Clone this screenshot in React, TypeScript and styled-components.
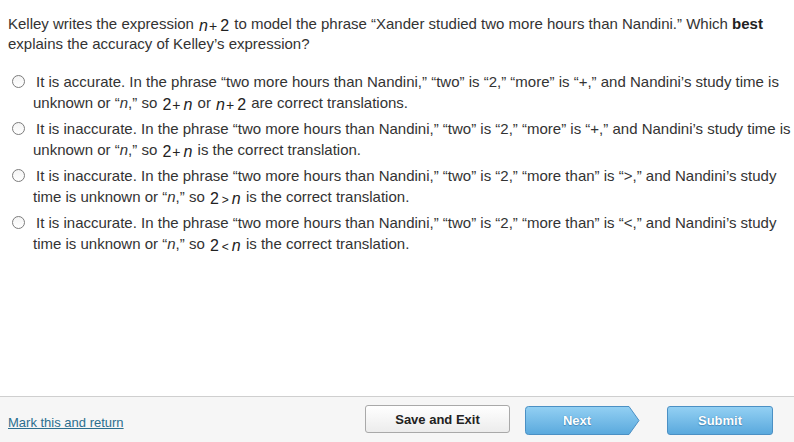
import React from 'react';
import styled, { createGlobalStyle } from 'styled-components';

const GlobalStyle = createGlobalStyle`
  html, body {
    margin: 0;
    padding: 0;
    background: #ffffff;
  }
  body {
    font-family: "Liberation Sans", Arial, sans-serif;
  }
`;

const Page = styled.div`
  width: 794px;
  height: 442px;
  display: flex;
  flex-direction: column;
  overflow: hidden;
`;

const Content = styled.div`
  flex: 1;
  padding: 14px 0 0 8px;
  color: #333333;
  font-size: 15px;
`;

const Question = styled.div`
  line-height: 20px;
  white-space: nowrap;

  b {
    color: #222;
  }
`;

const Options = styled.div`
  margin-top: 17px;
  display: flex;
  flex-direction: column;
  gap: 5px;
`;

const Option = styled.label`
  display: block;
  padding-left: 25px;
  line-height: 21px;
  white-space: nowrap;
  cursor: pointer;
`;

const Radio = styled.span`
  display: inline-block;
  box-sizing: border-box;
  width: 13px;
  height: 13px;
  margin-left: -21px;
  margin-right: 11px;
  border: 1px solid #7c7c7c;
  border-radius: 50%;
  background: linear-gradient(#f4f4f4, #ffffff);
  vertical-align: -1px;
`;

const Math = styled.span`
  font-family: "Liberation Sans", Arial, sans-serif;
  font-size: 16px;
  line-height: 0;
  position: relative;
  top: 2px;
  margin: 0 1px;
  color: #222;

  i {
    font-style: italic;
  }
`;

const Op = styled.span<{ $small?: boolean }>`
  margin: ${(p) => (p.$small ? '0 3px 0 3px' : '0 3px 0 1px')};
  font-size: ${(p) => (p.$small ? '12px' : '14px')};
`;

const Footer = styled.div`
  height: 45px;
  border-top: 1px solid #cfcfcf;
  background: #f6f6f6;
  display: flex;
  align-items: center;
  padding: 0 21px 0 8px;
`;

const MarkLink = styled.a`
  font-size: 13px;
  color: #2c6f8f;
  text-decoration: underline;
  margin-top: 6px;
  cursor: pointer;
`;

const Buttons = styled.div`
  margin-left: auto;
  display: flex;
  align-items: center;
  margin-top: 1px;
`;

const GreyButton = styled.button`
  width: 145px;
  height: 28px;
  box-sizing: border-box;
  border: 1px solid #a9a9a9;
  border-radius: 3px;
  background: linear-gradient(#ffffff, #ececec);
  color: #222;
  font-family: "Liberation Sans", Arial, sans-serif;
  font-weight: bold;
  font-size: 13px;
  padding: 0;
  margin-top: -2px;
`;

const NextWrap = styled.button`
  position: relative;
  width: 115px;
  height: 29px;
  margin-left: 15px;
  border: none;
  background: none;
  padding: 0;
  font-family: "Liberation Sans", Arial, sans-serif;
`;

const NextShape = styled.svg`
  position: absolute;
  left: 0;
  top: 0;
`;

const BlueLabel = styled.span<{ $offset?: number }>`
  position: relative;
  display: block;
  width: ${(p) => (p.$offset ? `${p.$offset}px` : '100%')};
  color: #ffffff;
  font-weight: bold;
  font-size: 13px;
  text-shadow: 0 0 1px #3a7fb0, 0 1px 1px #4b8fc0;
  text-align: center;
`;

const BlueButton = styled.button`
  width: 106px;
  height: 29px;
  margin-left: 27px;
  box-sizing: border-box;
  border: 1px solid #4b90c4;
  border-radius: 3px;
  background: linear-gradient(#93d0f3, #5aa9dd);
  padding: 0;
  font-family: "Liberation Sans", Arial, sans-serif;
`;

const options = [
  [
    <>It is accurate. In the phrase “two more hours than Nandini,” “two” is “2,” “more” is “+,” and Nandini’s study time is</>,
    <>unknown or “<i>n</i>,” so <Math>2<Op>+</Op><i>n</i></Math> or <Math><i>n</i><Op>+</Op>2</Math> are correct translations.</>,
  ],
  [
    <>It is inaccurate. In the phrase “two more hours than Nandini,” “two” is “2,” “more” is “+,” and Nandini’s study time is</>,
    <>unknown or “<i>n</i>,” so <Math>2<Op>+</Op><i>n</i></Math> is the correct translation.</>,
  ],
  [
    <>It is inaccurate. In the phrase “two more hours than Nandini,” “two” is “2,” “more than” is “&gt;,” and Nandini’s study</>,
    <>time is unknown or “<i>n</i>,” so <Math>2<Op $small>&gt;</Op><i>n</i></Math> is the correct translation.</>,
  ],
  [
    <>It is inaccurate. In the phrase “two more hours than Nandini,” “two” is “2,” “more than” is “&lt;,” and Nandini’s study</>,
    <>time is unknown or “<i>n</i>,” so <Math>2<Op $small>&lt;</Op><i>n</i></Math> is the correct translation.</>,
  ],
];

export default function App() {
  return (
    <>
      <GlobalStyle />
      <Page>
        <Content>
          <Question>
            Kelley writes the expression <Math><i>n</i><Op>+</Op>2</Math> to model the phrase “Xander studied two more hours than Nandini.” Which <b>best</b>
            <br />
            explains the accuracy of Kelley’s expression?
          </Question>
          <Options>
            {options.map((lines, i) => (
              <Option key={i}>
                <Radio />
                {lines[0]}
                <br />
                {lines[1]}
              </Option>
            ))}
          </Options>
        </Content>
        <Footer>
          <MarkLink>Mark this and return</MarkLink>
          <Buttons>
            <GreyButton>Save and Exit</GreyButton>
            <NextWrap>
              <NextShape width="115" height="29" viewBox="0 0 115 29">
                <defs>
                  <linearGradient id="nextFill" x1="0" y1="0" x2="0" y2="1">
                    <stop offset="0" stopColor="#93d0f3" />
                    <stop offset="1" stopColor="#5aa9dd" />
                  </linearGradient>
                </defs>
                <path
                  d="M3.5 0.5 H104 L114 14.5 L104 28.5 H3.5 Q0.5 28.5 0.5 25.5 V3.5 Q0.5 0.5 3.5 0.5 Z"
                  fill="url(#nextFill)"
                  stroke="#4b90c4"
                  strokeWidth="1"
                />
              </NextShape>
              <BlueLabel $offset={104}>Next</BlueLabel>
            </NextWrap>
            <BlueButton>
              <BlueLabel>Submit</BlueLabel>
            </BlueButton>
          </Buttons>
        </Footer>
      </Page>
    </>
  );
}
